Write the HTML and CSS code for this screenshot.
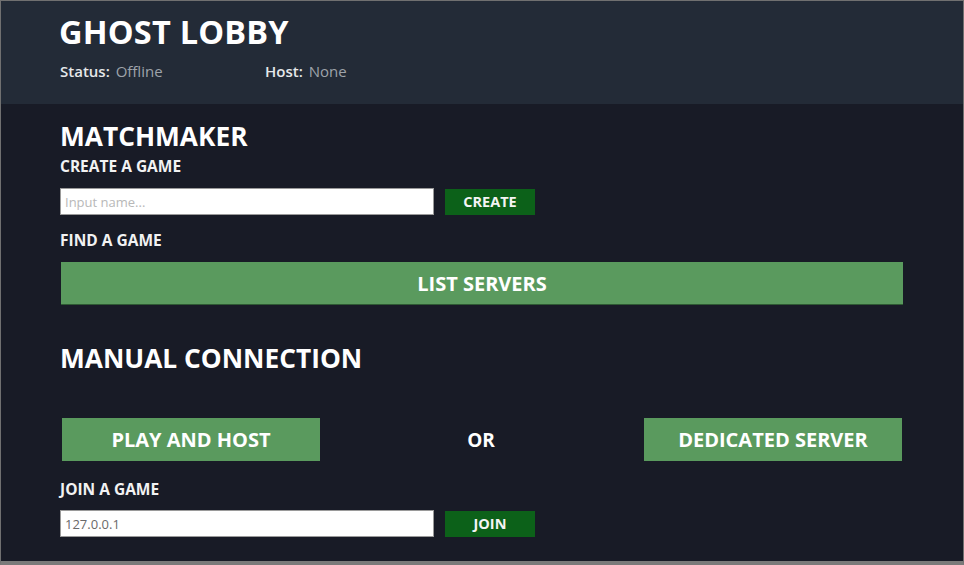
FILE: index.html
```html
<!DOCTYPE html>
<html>
<head>
<meta charset="utf-8">
<link rel="stylesheet" href="styles.css">
</head>
<body>
<div class="frame">
  <header class="header">
    <h1 class="title">GHOST LOBBY</h1>
    <div class="status-row">
      <div class="stat"><span class="stat-label">Status:</span> <span class="stat-value">Offline</span></div>
      <div class="stat"><span class="stat-label">Host:</span> <span class="stat-value">None</span></div>
    </div>
  </header>
  <main class="main">
    <h2 class="section-title">MATCHMAKER</h2>
    <div class="label">CREATE A GAME</div>
    <div class="input-row">
      <input class="text-input" type="text" placeholder="Input name...">
      <button class="small-btn">CREATE</button>
    </div>
    <div class="label find">FIND A GAME</div>
    <button class="big-btn list">LIST SERVERS</button>
    <h2 class="section-title manual">MANUAL CONNECTION</h2>
    <div class="host-row">
      <button class="big-btn half">PLAY AND HOST</button>
      <span class="or">OR</span>
      <button class="big-btn half">DEDICATED SERVER</button>
    </div>
    <div class="label join">JOIN A GAME</div>
    <div class="input-row join-row">
      <input class="text-input" type="text" value="127.0.0.1">
      <button class="small-btn">JOIN</button>
    </div>
  </main>
</div>
</body>
</html>
```
FILE: styles.css
```css
html, body {
  margin: 0;
  padding: 0;
  height: 100%;
  background: #181b26;
}
body {
  font-family: "Open Sans", "Noto Sans", sans-serif;
  color: #ffffff;
}
.frame {
  box-sizing: border-box;
  height: 565px;
  border: 1px solid #707070;
  border-bottom: 4px solid #7a7a7a;
  background: #181b26;
  display: flex;
  flex-direction: column;
}
.header {
  background: #232b37;
  height: 103px;
  box-sizing: border-box;
  padding: 8px 0 0 58px;
}
.title {
  margin: 0;
  font-size: 32.5px;
  font-weight: 700;
  line-height: 46px;
  letter-spacing: 0.2px;
}
.status-row {
  display: flex;
  margin-top: 6px;
  font-size: 15px;
  line-height: 20px;
}
.stat {
  width: 204px;
  padding-left: 1px;
}
.stat-label {
  font-weight: 600;
  color: #e6e8ea;
  margin-right: 2px;
}
.stat-value {
  color: #9ea3aa;
}
.main {
  padding: 15px 0 0 59px;
  width: 843px;
  display: flex;
  flex-direction: column;
  align-items: flex-start;
}
.section-title {
  margin: 0;
  font-size: 26.3px;
  font-weight: 700;
  line-height: 34px;
}
.label {
  font-size: 15.5px;
  font-weight: 700;
  line-height: 20px;
  margin-top: 3px;
  color: #f2f2f2;
}
.input-row {
  display: flex;
  align-items: center;
  margin-top: 12px;
}
.join-row {
  margin-top: 11px;
}
.text-input {
  box-sizing: border-box;
  width: 374px;
  height: 27px;
  border: 1px solid #9a9a9a;
  background: #ffffff;
  padding: 0 4px;
  font-family: "Open Sans", sans-serif;
  font-size: 13px;
  color: #6a6a6a;
  outline: none;
}
.text-input::placeholder {
  color: #b8b8b8;
}
.small-btn {
  margin-left: 11px;
  width: 90px;
  height: 26px;
  border: none;
  background: #0c6119;
  color: #f4f4f4;
  font-family: "Open Sans", sans-serif;
  font-weight: 700;
  font-size: 14.5px;
  padding: 0;
}
.find {
  margin-top: 15px;
}
.big-btn {
  border: none;
  background: #5a9a5e;
  color: #ffffff;
  font-family: "Open Sans", sans-serif;
  font-weight: 700;
  font-size: 20px;
  height: 43px;
  padding: 0;
}
.list {
  margin-top: 12px;
  margin-left: 1px;
  width: 842px;
  border-bottom: 1px solid #2e5a33;
}
.manual {
  margin-top: 36px;
}
.host-row {
  align-self: stretch;
  display: flex;
  align-items: center;
  justify-content: space-between;
  margin-top: 43px;
  padding: 0 1px 0 2px;
}
.half {
  width: 258px;
}
.or {
  font-size: 19px;
  font-weight: 700;
  margin-right: 2px;
}
.join {
  margin-top: 18px;
}
```
